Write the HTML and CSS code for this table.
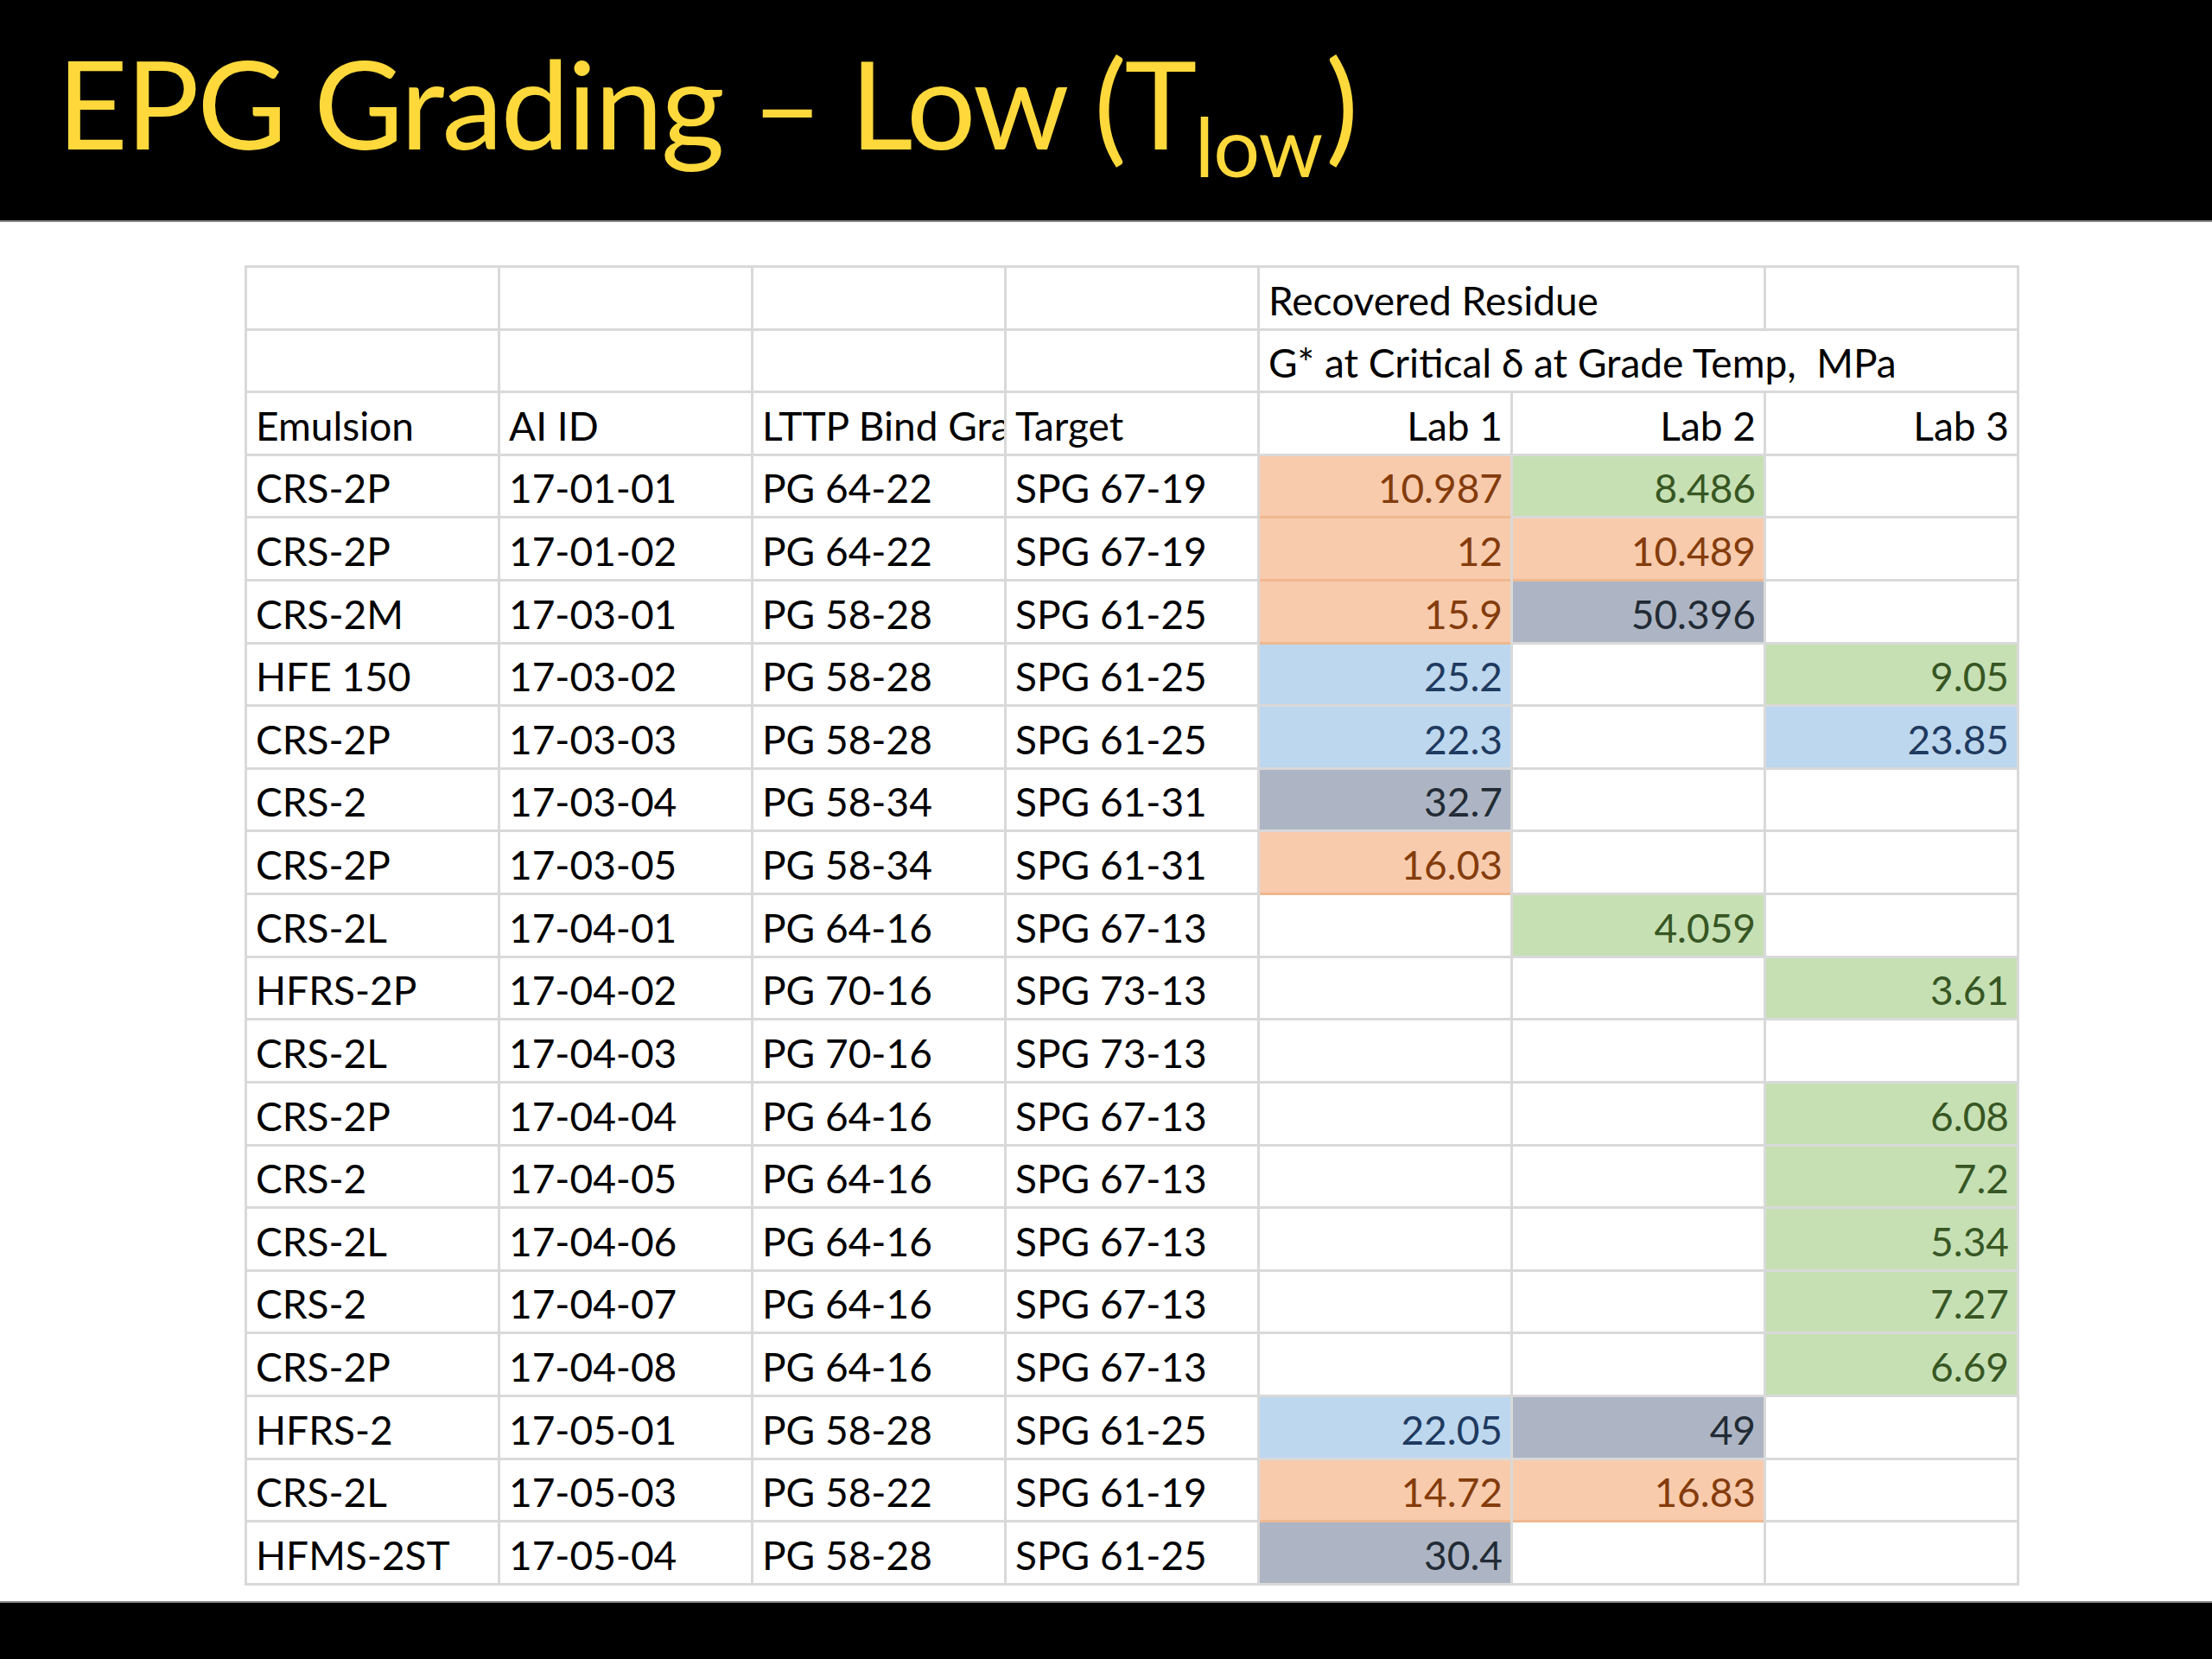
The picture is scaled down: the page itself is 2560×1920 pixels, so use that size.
FILE: index.html
```html
<!DOCTYPE html>
<html lang="en">
<head>
<meta charset="utf-8">
<title>EPG Grading – Low (Tlow)</title>
<link rel="stylesheet" href="styles.css">
</head>
<body>
<header class="slide-header">
  <h1 class="title">EPG Grading – Low (T<sub class="sub">low</sub>)</h1>
</header>
<main class="slide-body">
  <div class="sheet">
    <div class="c"></div><div class="c"></div><div class="c"></div><div class="c"></div>
    <div class="c span2">Recovered Residue</div><div class="c"></div>

    <div class="c"></div><div class="c"></div><div class="c"></div><div class="c"></div>
    <div class="c span3">G* at Critical δ at Grade Temp,&nbsp; MPa</div>

    <div class="c">Emulsion</div><div class="c">AI ID</div><div class="c clip">LTTP Bind Grade</div><div class="c">Target</div>
    <div class="c num">Lab 1</div><div class="c num">Lab 2</div><div class="c num">Lab 3</div>

    <div class="c">CRS-2P</div><div class="c">17-01-01</div><div class="c">PG 64-22</div><div class="c">SPG 67-19</div>
    <div class="c num orange">10.987</div><div class="c num green">8.486</div><div class="c"></div>

    <div class="c">CRS-2P</div><div class="c">17-01-02</div><div class="c">PG 64-22</div><div class="c">SPG 67-19</div>
    <div class="c num orange">12</div><div class="c num orange">10.489</div><div class="c"></div>

    <div class="c">CRS-2M</div><div class="c">17-03-01</div><div class="c">PG 58-28</div><div class="c">SPG 61-25</div>
    <div class="c num orange">15.9</div><div class="c num gray">50.396</div><div class="c"></div>

    <div class="c">HFE 150</div><div class="c">17-03-02</div><div class="c">PG 58-28</div><div class="c">SPG 61-25</div>
    <div class="c num blue">25.2</div><div class="c"></div><div class="c num green">9.05</div>

    <div class="c">CRS-2P</div><div class="c">17-03-03</div><div class="c">PG 58-28</div><div class="c">SPG 61-25</div>
    <div class="c num blue">22.3</div><div class="c"></div><div class="c num blue">23.85</div>

    <div class="c">CRS-2</div><div class="c">17-03-04</div><div class="c">PG 58-34</div><div class="c">SPG 61-31</div>
    <div class="c num gray">32.7</div><div class="c"></div><div class="c"></div>

    <div class="c">CRS-2P</div><div class="c">17-03-05</div><div class="c">PG 58-34</div><div class="c">SPG 61-31</div>
    <div class="c num orange">16.03</div><div class="c"></div><div class="c"></div>

    <div class="c">CRS-2L</div><div class="c">17-04-01</div><div class="c">PG 64-16</div><div class="c">SPG 67-13</div>
    <div class="c"></div><div class="c num green">4.059</div><div class="c"></div>

    <div class="c">HFRS-2P</div><div class="c">17-04-02</div><div class="c">PG 70-16</div><div class="c">SPG 73-13</div>
    <div class="c"></div><div class="c"></div><div class="c num green">3.61</div>

    <div class="c">CRS-2L</div><div class="c">17-04-03</div><div class="c">PG 70-16</div><div class="c">SPG 73-13</div>
    <div class="c"></div><div class="c"></div><div class="c"></div>

    <div class="c">CRS-2P</div><div class="c">17-04-04</div><div class="c">PG 64-16</div><div class="c">SPG 67-13</div>
    <div class="c"></div><div class="c"></div><div class="c num green">6.08</div>

    <div class="c">CRS-2</div><div class="c">17-04-05</div><div class="c">PG 64-16</div><div class="c">SPG 67-13</div>
    <div class="c"></div><div class="c"></div><div class="c num green">7.2</div>

    <div class="c">CRS-2L</div><div class="c">17-04-06</div><div class="c">PG 64-16</div><div class="c">SPG 67-13</div>
    <div class="c"></div><div class="c"></div><div class="c num green">5.34</div>

    <div class="c">CRS-2</div><div class="c">17-04-07</div><div class="c">PG 64-16</div><div class="c">SPG 67-13</div>
    <div class="c"></div><div class="c"></div><div class="c num green">7.27</div>

    <div class="c">CRS-2P</div><div class="c">17-04-08</div><div class="c">PG 64-16</div><div class="c">SPG 67-13</div>
    <div class="c"></div><div class="c"></div><div class="c num green">6.69</div>

    <div class="c">HFRS-2</div><div class="c">17-05-01</div><div class="c">PG 58-28</div><div class="c">SPG 61-25</div>
    <div class="c num blue">22.05</div><div class="c num gray">49</div><div class="c"></div>

    <div class="c">CRS-2L</div><div class="c">17-05-03</div><div class="c">PG 58-22</div><div class="c">SPG 61-19</div>
    <div class="c num orange">14.72</div><div class="c num orange">16.83</div><div class="c"></div>

    <div class="c">HFMS-2ST</div><div class="c">17-05-04</div><div class="c">PG 58-28</div><div class="c">SPG 61-25</div>
    <div class="c num gray">30.4</div><div class="c"></div><div class="c"></div>
  </div>
</main>
<footer class="slide-footer"></footer>
</body>
</html>
```

FILE: styles.css
```css
html, body {
  margin: 0;
  padding: 0;
}
body {
  width: 2560px;
  height: 1920px;
  background: #ffffff;
  display: flex;
  flex-direction: column;
  font-family: Lato, "Liberation Sans", sans-serif;
  overflow: hidden;
}
.slide-header {
  height: 255px;
  background: #000000;
  border-bottom: 2px solid #8a8a8a;
  flex: none;
}
.title {
  margin: 0;
  padding: 47px 0 0 66px;
  font-weight: 400;
  font-size: 142px;
  line-height: 1;
  letter-spacing: -2.5px;
  color: #ffd93b;
  white-space: nowrap;
}
.sub {
  font-size: 0.67em;
  vertical-align: -0.34em;
  line-height: 0;
  letter-spacing: -1px;
  margin-right: 4px;
}
.slide-body {
  flex: 1;
  padding: 307px 0 0 283px;
  margin-top: -257px;
}
.sheet {
  display: grid;
  grid-template-columns: repeat(7, 290px);
  grid-auto-rows: 69.62px;
  gap: 3px;
  padding: 3px;
  width: max-content;
  background: #d9d9d9;
  font-size: 46px;
  color: #000000;
}
.c {
  background: #ffffff;
  display: flex;
  align-items: flex-end;
  padding: 0 9px 9px 10px;
  line-height: 1;
  white-space: nowrap;
  overflow: hidden;
  min-width: 0;
}
.span2 { grid-column: span 2; }
.span3 { grid-column: span 3; }
.clip { overflow: hidden; text-overflow: clip; }
.num { justify-content: flex-end; }
.orange { background: #f8cbad; color: #843c0c; box-shadow: 0 3px 0 #efb890; }
.green { background: #c6e0b4; color: #375623; }
.blue { background: #bdd7ee; color: #1f3a5f; }
.gray { background: #adb5c4; color: #222b35; }
.slide-footer {
  height: 65px;
  background: #000000;
  border-top: 2px solid #8a8a8a;
  flex: none;
}
```
